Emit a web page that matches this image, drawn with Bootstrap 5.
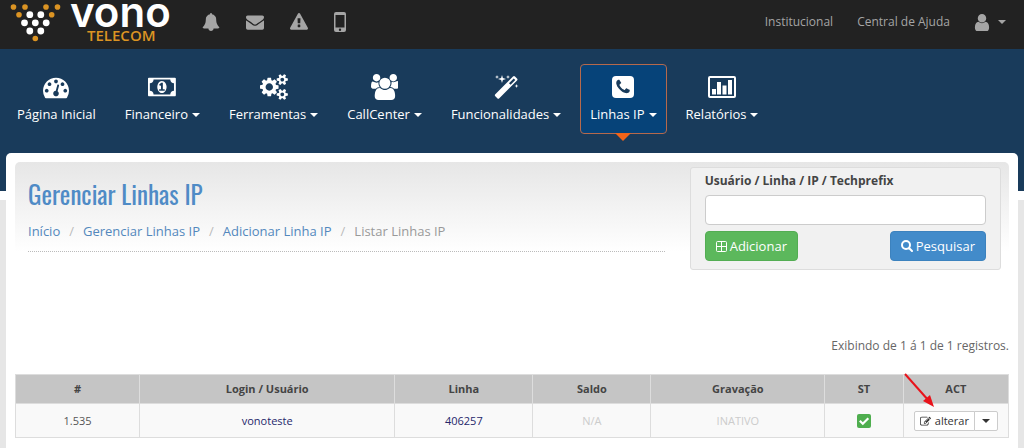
<!DOCTYPE html>
<html lang="pt-BR">
<head>
<meta charset="utf-8">
<meta name="viewport" content="width=device-width, initial-scale=1">
<title>Gerenciar Linhas IP</title>
<link rel="stylesheet" href="https://cdn.jsdelivr.net/npm/bootstrap@5.3.0/dist/css/bootstrap.min.css">
<style>
body { font-family: "Open Sans", sans-serif; font-size: 13px; line-height: 20px; color: #555; background: #e6e6e6; }
svg { fill: currentColor; }
.topbar { background: #222; height: 49px; padding: 0 18px 0 8px; color: #a5a5a5; font-size: 12px; }
.topbar a, .topbar .btn { color: inherit; }
.topbar .btn { font-size: 12px; line-height: 20px; }
.topbar nav { padding-bottom: 5px; }
.brand { width: 168px; }
.brand-name { font: 600 42px "Inter", sans-serif; fill: #fff; }
.brand-sub { font: 600 15px "Open Sans", sans-serif; fill: #dc9423; }
.tri { display: inline-block; border: 4px solid transparent; border-top-color: currentColor; border-bottom: 0; vertical-align: 2px; margin-left: 4px; }
.quick { margin-left: 26px; gap: 26px; }
.account { gap: 24px; }
.account .tri { margin-left: 8px; }
.mainnav { background: #193b5b; border-bottom: 9px solid #fff; padding: 15px 7px 57px; gap: 9px; }
.mainnav .nav-link { position: relative; color: #fff; padding: 9px; border: 1px solid transparent; border-radius: 4px; text-align: center; line-height: 20px; white-space: nowrap; }
.mainnav .nav-link svg { display: block; height: 26px; margin: 0 auto 4px; }
.mainnav .nav-link.active { background: #064379; border-color: #b5694c; }
.mainnav .nav-link.active::after { content: ""; position: absolute; left: 50%; top: 100%; margin-left: -8px; border: 8px solid transparent; border-top-color: #f26419; border-bottom: 0; }
.panel { background: #fff; margin: -47px 6px 0; padding: 9px; border-radius: 5px 5px 0 0; position: relative; }
.heading { background: linear-gradient(#e6e6e6, #fff 90px); border-radius: 5px; min-height: 174px; }
.heading-left { padding: 13px 13px 0; }
.page-title { font: 400 25px/38px "Oswald", "Roboto Condensed", "Liberation Sans Narrow", sans-serif; color: #4f8bc6; margin: 0; }
.breadcrumb { --bs-breadcrumb-divider-color: #bbb; --bs-breadcrumb-item-padding-x: 9px; font-size: 13px; margin: 8px 0 0; padding-bottom: 10px; border-bottom: 1px dotted #bbb; }
.breadcrumb a { color: #5388bd; }
.breadcrumb .active { color: #999; }
.heading-right { padding: 5px 8px 0 12px; }
.finder { background: #f1f1f1; border: 1px solid #ddd; border-radius: 3px; padding: 3px 14px 8px; }
.finder label { font-size: 12px; font-weight: 700; color: #444; margin-bottom: 4px; line-height: 20px; }
.finder .form-control { height: 30px; border: 1px solid #ccc; border-radius: 4px; margin-bottom: 6px; }
.finder .btn { color: #fff; font-size: 13px; line-height: 20px; padding: 4px 10px; border-radius: 4px; gap: 3px; }
.btn-add { background: #5cb85c; border-color: #53ad53; }
.btn-find { background: #428bca; border-color: #3c82be; }
.records { font-size: 12px; margin-bottom: 18px; text-align: right; color: #666; }
.lines { table-layout: fixed; font-size: 11px; text-align: center; margin: 0; border-color: #ddd; }
.lines th { background: #c5c5c5; color: #444; line-height: 20px; padding: 4px; }
.lines td { background: #f9f9f9; color: #555; line-height: 20px; padding: 6px 4px; vertical-align: middle; height: 34px; }
.lines a { color: #26276b; }
.lines .off { color: #ccc; }
.w-id { width: 12.5%; } .w-login { width: 25.7%; } .w-line { width: 13.9%; } .w-bal { width: 11.9%; } .w-rec { width: 17.5%; } .w-st { width: 7.9%; }
.act { position: relative; }
.act .btn { background: #fff; border: 1px solid #ccc; color: #333; font-size: 11px; line-height: 16px; padding: 1px 5px; border-radius: 2px; }
.act .tri { margin: 0 2px; }
.pointer { position: absolute; left: -1px; top: -32px; }
</style>
</head>
<body class="min-vh-100 d-flex flex-column">
<header class="topbar d-flex align-items-center">
  <a href="#" class="brand" aria-label="Vono Telecom">
    <svg class="d-block" width="168" height="49" viewBox="0 0 168 49">
      <g fill="#dc9423"><circle cx="5.500" cy="7" r="2.800"/><circle cx="17" cy="7" r="2.800"/><circle cx="38" cy="7" r="2.800"/><circle cx="49.500" cy="7" r="2.800"/><circle cx="11" cy="14.700" r="2.800"/><circle cx="43.700" cy="14.700" r="2.800"/><circle cx="27.300" cy="38.500" r="2.800"/></g>
      <g fill="#fff"><circle cx="21.800" cy="14.700" r="3.400"/><circle cx="32.800" cy="14.700" r="3.400"/><circle cx="16.500" cy="22.800" r="3.400"/><circle cx="27.300" cy="22.800" r="3.400"/><circle cx="38.200" cy="22.800" r="3.400"/><circle cx="21.800" cy="31" r="3.400"/><circle cx="32.800" cy="31" r="3.400"/></g>
      <text class="brand-name" x="62" y="27">vono</text>
      <text class="brand-sub" x="79" y="41">TELECOM</text>
    </svg>
  </a>
  <nav class="quick d-flex align-items-center" aria-label="Atalhos">
    <a href="#" aria-label="Avisos"><svg class="d-block" width="18" height="18" viewBox="0 0 1792 1792"><path d="M1728 1408q0 52-38 90t-90 38h-448q0 106-75 181t-181 75-181-75-75-181h-448q-52 0-90-38t-38-90q50-42 91-88t85-119.500 74.500-158.500 50-206 19.500-260q0-152 117-282.500t307-158.500q-8-19-8-39 0-40 28-68t68-28 68 28 28 68q0 20-8 39 190 28 307 158.500t117 282.500q0 139 19.500 260t50 206 74.500 158.500 85 119.500 91 88z"/></svg></a>
    <a href="#" aria-label="Mensagens"><svg class="d-block" width="18" height="18" viewBox="0 0 1792 1792"><path d="M1792 710v794q0 66-47 113t-113 47h-1472q-66 0-113-47t-47-113v-794q44 49 101 87 362 246 497 345 57 42 92.500 65.500t94.500 48 110 24.500h2q51 0 110-24.500t94.500-48 92.500-65.500q170-123 498-345 57-39 100-87zm0-294q0 79-49 151t-122 123q-376 261-468 325-10 7-42.500 31t-54 38.500-52 32.500-57.500 27-50 9h-2q-23 0-50-9t-57.500-27-52-32.500-54-38.500-42.500-31q-91-64-262-182.500t-205-142.500q-62-42-117-115.500t-55-136.500q0-78 41.500-130t118.500-52h1472q65 0 112.500 47t47.500 113z"/></svg></a>
    <a href="#" aria-label="Alertas"><svg class="d-block" width="18" height="18" viewBox="0 0 1792 1792"><path d="M1024 1375v-190q0-14-9.500-23.500t-22.500-9.500h-192q-13 0-22.500 9.500t-9.500 23.500v190q0 14 9.500 23.500t22.500 9.500h192q13 0 22.500-9.500t9.500-23.500zm-2-374l18-459q0-12-10-19-13-11-24-11h-220q-11 0-24 11-10 7-10 21l17 457q0 10 10 16.500t24 6.500h185q14 0 23.500-6.500t10.500-16.500zm-14-934l768 1408q35 63-2 126-17 29-46.500 46t-63.500 17h-1536q-34 0-63.500-17t-46.500-46q-37-63-2-126l768-1408q17-31 47-49t65-18 65 18 47 49z"/></svg></a>
    <a href="#" aria-label="Celular"><svg class="d-block" width="12" height="20" viewBox="0 0 12 20"><path fill-rule="evenodd" d="M2 0h8a2 2 0 0 1 2 2v16a2 2 0 0 1-2 2H2a2 2 0 0 1-2-2V2a2 2 0 0 1 2-2zM1.500 3v12.500h9V3zM6 16.500a1.200 1.200 0 1 0 0 2.400 1.200 1.200 0 0 0 0-2.400z"/></svg></a>
  </nav>
  <nav class="account ms-auto d-flex align-items-center" aria-label="Conta">
    <a href="#" class="text-decoration-none">Institucional</a>
    <a href="#" class="text-decoration-none">Central de Ajuda</a>
    <button class="btn border-0 p-0" type="button" aria-label="Usuário"><svg width="16" height="17" viewBox="256 128 1280 1536"><path d="M1536 1399q0 109-62.500 187t-150.500 78h-854q-88 0-150.500-78t-62.500-187q0-85 8.500-160.500t31.500-152 58.500-131 94-89 134.500-34.500q131 128 313 128t313-128q76 0 134.500 34.500t94 89 58.500 131 31.500 152 8.500 160.500zm-256-887q0 159-112.500 271.500t-271.500 112.500-271.500-112.500-112.500-271.500 112.500-271.500 271.500-112.500 271.500 112.500 112.500 271.500z"/></svg><span class="tri"></span></button>
  </nav>
</header>

<nav class="mainnav nav flex-nowrap align-items-start" aria-label="Principal">
  <a href="#" class="nav-link"><svg viewBox="0 0 1792 1792"><path d="M384 1152q0-53-37.500-90.500t-90.500-37.500-90.500 37.500-37.500 90.500 37.500 90.500 90.500 37.500 90.500-37.500 37.500-90.500zm192-448q0-53-37.500-90.500t-90.500-37.500-90.500 37.500-37.500 90.500 37.500 90.500 90.500 37.500 90.500-37.500 37.500-90.500zm428 481l101-382q6-26-7.500-48.500t-38.500-29.500-48 6.500-30 39.500l-101 382q-60 5-107 43.500t-63 98.500q-20 77 20 146t117 89 146-20 89-117q16-60-6-117t-72-91zm660-33q0-53-37.500-90.500t-90.500-37.500-90.500 37.500-37.500 90.500 37.500 90.500 90.500 37.500 90.500-37.500 37.500-90.500zm-640-640q0-53-37.500-90.500t-90.500-37.500-90.500 37.500-37.500 90.500 37.500 90.500 90.500 37.500 90.500-37.500 37.500-90.500zm448 192q0-53-37.500-90.500t-90.500-37.500-90.500 37.500-37.500 90.500 37.500 90.500 90.500 37.500 90.500-37.500 37.500-90.500zm320 448q0 261-141 483-19 29-54 29h-1402q-35 0-54-29-141-221-141-483 0-182 71-348t191-286 286-191 348-71 348 71 286 191 191 286 71 348z"/></svg>Página Inicial</a>
  <a href="#" class="nav-link"><svg viewBox="0 0 1920 1792"><path d="M768 1152h384v-96h-128v-448h-114l-148 137 77 80q42-37 55-57h2v288h-128v96zm512-256q0 70-21 142t-59.500 134-101.500 101-138 39-138-39-101.500-101-59.500-134-21-142 21-142 59.500-134 101.500-101 138-39 138 39 101.500 101 59.500 134 21 142zm512 256v-512q-106 0-181-75t-75-181h-1152q0 106-75 181t-181 75v512q106 0 181 75t75 181h1152q0-106 75-181t181-75zm128-832v1152q0 26-19 45t-45 19h-1792q-26 0-45-19t-19-45v-1152q0-26 19-45t45-19h1792q26 0 45 19t19 45z" fill-rule="evenodd"/></svg>Financeiro<span class="tri"></span></a>
  <a href="#" class="nav-link"><svg viewBox="0 0 1920 1792"><path d="M896 896q0-106-75-181t-181-75-181 75-75 181 75 181 181 75 181-75 75-181zm768 512q0-52-38-90t-90-38-90 38-38 90q0 53 37.500 90.500t90.500 37.500 90.500-37.500 37.500-90.500zm0-1024q0-52-38-90t-90-38-90 38-38 90q0 53 37.500 90.500t90.500 37.500 90.500-37.500 37.500-90.500zm-384 421v185q0 10-7 19.500t-16 10.500l-155 24q-11 35-32 76 34 48 90 115 7 11 7 20 0 12-7 19-23 30-82.500 89.500t-78.500 59.500q-11 0-21-7l-115-90q-37 19-77 31-11 108-23 155-7 24-30 24h-186q-11 0-20-7.500t-10-17.500l-23-153q-34-10-75-31l-118 89q-7 7-20 7-11 0-21-8-144-133-144-160 0-9 7-19 10-14 41-53t47-61q-23-44-35-82l-152-24q-10-1-17-9.500t-7-19.500v-185q0-10 7-19.500t16-10.500l155-24q11-35 32-76-34-48-90-115-7-11-7-20 0-12 7-20 22-30 82-89t79-59q11 0 21 7l115 90q34-18 77-32 11-108 23-154 7-24 30-24h186q11 0 20 7.500t10 17.500l23 153q34 10 75 31l118-89q8-7 20-7 11 0 21 8 144 133 144 160 0 8-7 19-12 16-42 54t-45 60q23 48 34 82l152 23q10 2 17 10.500t7 19.500zm640 533v140q0 16-149 31-12 27-30 52 51 113 51 138 0 4-4 7-122 71-124 71-8 0-46-47t-52-68q-20 2-30 2t-30-2q-14 21-52 68t-46 47q-2 0-124-71-4-3-4-7 0-25 51-138-18-25-30-52-149-15-149-31v-140q0-16 149-31 13-29 30-52-51-113-51-138 0-4 4-7 4-2 35-20t59-34 30-16q8 0 46 46.500t52 67.500q20-2 30-2t30 2q51-71 92-112l6-2q4 0 124 70 4 3 4 7 0 25-51 138 17 23 30 52 149 15 149 31zm0-1024v140q0 16-149 31-12 27-30 52 51 113 51 138 0 4-4 7-122 71-124 71-8 0-46-47t-52-68q-20 2-30 2t-30-2q-14 21-52 68t-46 47q-2 0-124-71-4-3-4-7 0-25 51-138-18-25-30-52-149-15-149-31v-140q0-16 149-31 13-29 30-52-51-113-51-138 0-4 4-7 4-2 35-20t59-34 30-16q8 0 46 46.500t52 67.500q20-2 30-2t30 2q51-71 92-112l6-2q4 0 124 70 4 3 4 7 0 25-51 138 17 23 30 52 149 15 149 31z"/></svg>Ferramentas<span class="tri"></span></a>
  <a href="#" class="nav-link"><svg viewBox="0 0 1920 1792"><path d="M593 896q-162 5-265 128h-134q-82 0-138-40.500t-56-118.500q0-353 124-353 6 0 43.500 21t97.500 42.500 119 21.500q67 0 133-23-5 37-5 66 0 159 93 293zm1071 637q0 120-73 189.500t-194 69.500h-874q-121 0-194-69.500t-73-189.500q0-53 3.500-103.500t14-109 26.500-108.500 43-97.500 62-81 85.500-53.500 111.500-20q10 0 43 21.500t73 48 107 48 135 21.500 135-21.500 107-48 73-48 43-21.500q61 0 111.500 20t85.500 53.500 62 81 43 97.500 26.500 108.500 14 109 3.500 103.500zm-1024-1277q0 106-75 181t-181 75-181-75-75-181 75-181 181-75 181 75 75 181zm704 384q0 159-112.500 271.500t-271.500 112.500-271.500-112.500-112.500-271.500 112.500-271.500 271.500-112.500 271.500 112.500 112.500 271.500zm576 225q0 78-56 118.500t-138 40.500h-134q-103-123-265-128 93-134 93-293 0-29-5-66 66 23 133 23 59 0 119-21.500t97.500-42.500 43.500-21q124 0 124 353zm-128-609q0 106-75 181t-181 75-181-75-75-181 75-181 181-75 181 75 75 181z"/></svg>CallCenter<span class="tri"></span></a>
  <a href="#" class="nav-link"><svg viewBox="0 0 26 26"><path fill-rule="evenodd" d="M2.300 20.300 20 2.600q1-1 2 0l2 2q1 1 0 2L6.300 24.300q-1 1-2 0l-2-2q-1-1 0-2zM16 9.200l1.600 1.600 4.700-4.700-1.600-1.600z"/><path d="m9 1 .9 3.100L13 5l-3.100.9L9 9l-.9-3.100L5 5l3.100-.9zM4 1l.5 1.500L6 3l-1.500.5L4 5l-.5-1.500L2 3l1.500-.5zM15 1l.5 1.500L17 3l-1.500.5L15 5l-.5-1.500L13 3l1.500-.5zM23.500 10l.5 1.500 1.500.5-1.500.5-.5 1.500-.5-1.500-1.500-.5 1.500-.5z"/></svg>Funcionalidades<span class="tri"></span></a>
  <a href="#" class="nav-link active" aria-current="page"><svg viewBox="0 0 26 26"><rect x="2" y="2" width="22" height="22" rx="4"/><path fill="#193b5b" transform="translate(4.400 4.400) scale(.0096)" d="M1600 1240q0 27-10 70.500t-21 68.500q-21 50-122 106-94 51-186 51-27 0-53-3.500t-57.500-12.500-47-14.500-55.500-20.500-49-18q-98-35-175-83-127-79-264-216t-216-264q-48-77-83-175-3-9-18-49t-20.500-55.500-14.500-47-12.500-57.500-3.500-53q0-92 51-186 56-101 106-122 25-11 68.500-21t70.500-10q14 0 21 3 18 6 53 76 11 19 30 54t35 63.500 31 53.500q3 4 17.500 25t21.500 35.500 7 28.500q0 20-28.500 50t-62 55-62 53-28.500 46q0 9 5 22.500t8.500 20.500 14 24 11.500 19q76 137 174 235t235 174q2 1 19 11.500t24 14 20.500 8.500 22.500 5q18 0 46-28.500t53-62 55-62 50-28.500q14 0 28.500 7t35.500 21.500 25 17.500q25 15 53.500 31t63.500 35 54 30q70 35 76 53 3 7 3 21z"/></svg>Linhas IP<span class="tri"></span></a>
  <a href="#" class="nav-link"><svg viewBox="0 0 28 26"><path fill-rule="evenodd" d="M2 2h24a2 2 0 0 1 2 2v18a2 2 0 0 1-2 2H2a2 2 0 0 1-2-2V4a2 2 0 0 1 2-2zm0 2v18h24V4zM4 15h4v5.500H4zM9 8h4v12.500H9zM14.500 11.500h4v9h-4zM20 6h4v14.500h-4z"/></svg>Relatórios<span class="tri"></span></a>
</nav>

<main class="panel flex-grow-1">
  <section class="heading row g-0">
    <div class="col-8 heading-left">
      <h1 class="page-title">Gerenciar Linhas IP</h1>
      <ol class="breadcrumb">
        <li class="breadcrumb-item"><a href="#" class="text-decoration-none">Início</a></li>
        <li class="breadcrumb-item"><a href="#" class="text-decoration-none">Gerenciar Linhas IP</a></li>
        <li class="breadcrumb-item"><a href="#" class="text-decoration-none">Adicionar Linha IP</a></li>
        <li class="breadcrumb-item active">Listar Linhas IP</li>
      </ol>
    </div>
    <div class="col-4 heading-right">
      <form class="finder">
        <label class="d-block" for="q">Usuário / Linha / IP / Techprefix</label>
        <input class="form-control" id="q" type="text">
        <div class="d-flex justify-content-between">
          <button type="button" class="btn btn-add d-flex align-items-center"><svg width="11" height="11" viewBox="0 0 11 11"><path fill="none" stroke="currentColor" d="M1.500.5h8a1 1 0 0 1 1 1v8a1 1 0 0 1-1 1h-8a1 1 0 0 1-1-1v-8a1 1 0 0 1 1-1zM5.500 1v9M1 5.500h9"/></svg>Adicionar</button>
          <button type="submit" class="btn btn-find d-flex align-items-center"><svg width="12" height="12" viewBox="0 0 12 12"><path fill="none" stroke="currentColor" stroke-width="2" stroke-linecap="round" d="M5 1a4 4 0 1 1 0 8 4 4 0 0 1 0-8zM8 8l3 3"/></svg>Pesquisar</button>
        </div>
      </form>
    </div>
  </section>
  <p class="records">Exibindo de 1 á 1 de 1 registros.</p>
  <table class="table table-bordered lines">
    <thead>
      <tr><th class="w-id">#</th><th class="w-login">Login / Usuário</th><th class="w-line">Linha</th><th class="w-bal">Saldo</th><th class="w-rec">Gravação</th><th class="w-st">ST</th><th>ACT</th></tr>
    </thead>
    <tbody>
      <tr>
        <td>1.535</td>
        <td><a href="#" class="text-decoration-none">vonoteste</a></td>
        <td><a href="#" class="text-decoration-none">406257</a></td>
        <td class="off">N/A</td>
        <td class="off">INATIVO</td>
        <td><svg class="d-block mx-auto" width="14" height="14" viewBox="0 0 14 14" role="img" aria-label="Ativo"><rect width="14" height="14" rx="2" fill="#4fae4f"/><path fill="none" stroke="#fff" stroke-width="2.200" d="m2.800 6.800 3 3 5.500-5.500"/></svg></td>
        <td class="act">
          <div class="btn-group">
            <button type="button" class="btn d-flex align-items-center"><svg class="me-1" width="11" height="11" viewBox="0 0 1792 1792"><path d="M888 1184l116-116-152-152-116 116v56h96v96h56zm440-720q-16-16-33 1l-350 350q-17 17-1 33t33-1l350-350q17-17 1-33zm80 594v190q0 119-84.500 203.500t-203.500 84.500h-832q-119 0-203.500-84.500t-84.500-203.500v-832q0-119 84.500-203.500t203.500-84.500h832q63 0 117 25 15 7 18 23 3 17-9 29l-49 49q-14 14-32 8-23-6-45-6h-832q-66 0-113 47t-47 113v832q0 66 47 113t113 47h832q66 0 113-47t47-113v-126q0-13 9-22l64-64q15-15 35-7t20 29zm-96-738l288 288-672 672h-288v-288zm444 132l-92 92-288-288 92-92q28-28 68-28t68 28l152 152q28 28 28 68t-28 68z"/></svg>alterar</button>
            <button type="button" class="btn" aria-label="Mais opções"><span class="tri"></span></button>
          </div>
          <svg class="pointer" width="34" height="38" viewBox="0 0 34 38" aria-hidden="true"><path stroke="#e8131b" stroke-width="2" d="m2 2 24 27"/><path fill="#e8131b" d="m31 35-11-6 7-6z"/></svg>
        </td>
      </tr>
    </tbody>
  </table>
</main>
<script src="https://cdn.jsdelivr.net/npm/bootstrap@5.3.0/dist/js/bootstrap.bundle.min.js"></script>
</body>
</html>
